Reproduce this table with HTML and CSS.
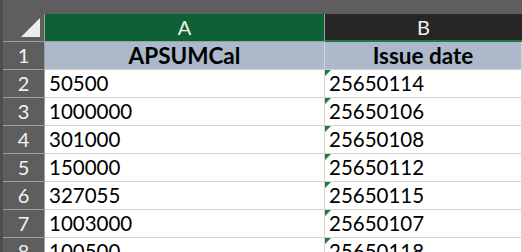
FILE: index.html
```html
<!DOCTYPE html>
<html lang="en">
<head>
    <meta charset="UTF-8">
    <title>Sheet</title>
    <link rel="stylesheet" href="styles.css">
</head>
<body>
    <div class="sheet">
        <div class="row col-heads">
            <div class="corner"><span class="corner-mark"></span></div>
            <div class="col-head active">A</div>
            <div class="col-head current">B</div>
        </div>

        <div class="row title-row">
            <div class="row-num">1</div>
            <div class="cell title">APSUMCal</div>
            <div class="cell title">Issue date</div>
        </div>
        <div class="row">
            <div class="row-num">2</div>
            <div class="cell">50500</div>
            <div class="cell flagged">25650114</div>
        </div>
        <div class="row">
            <div class="row-num">3</div>
            <div class="cell">1000000</div>
            <div class="cell flagged">25650106</div>
        </div>
        <div class="row">
            <div class="row-num">4</div>
            <div class="cell">301000</div>
            <div class="cell flagged">25650108</div>
        </div>
        <div class="row">
            <div class="row-num">5</div>
            <div class="cell">150000</div>
            <div class="cell flagged">25650112</div>
        </div>
        <div class="row">
            <div class="row-num">6</div>
            <div class="cell">327055</div>
            <div class="cell flagged">25650115</div>
        </div>
        <div class="row">
            <div class="row-num">7</div>
            <div class="cell">1003000</div>
            <div class="cell flagged">25650107</div>
        </div>
        <div class="row">
            <div class="row-num">8</div>
            <div class="cell">100500</div>
            <div class="cell flagged">25650118</div>
        </div>
    </div>
</body>
</html>
```

FILE: styles.css
```css
body {
    margin: 0;
    background-color: #5e5e5e;
    font-family: Lato, "Liberation Sans", sans-serif;
    overflow: hidden;
}
.sheet {
    padding-top: 14px;
    border-left: 3px solid #4f4f4f;
    width: 522px;
    box-sizing: border-box;
}
.row {
    display: grid;
    grid-template-columns: 42px 280px 1fr;
    height: 28px;
    background-color: #ffffff;
}
.row-num {
    background-color: #5e5e5e;
    color: #f2f2f2;
    font-size: 20px;
    text-align: center;
    line-height: 27px;
    border-right: 1px solid #a0a0a0;
    border-bottom: 1px solid #a0a0a0;
}
.cell {
    position: relative;
    font-size: 20.5px;
    line-height: 27px;
    color: #000;
    padding-left: 4px;
    border-bottom: 1px solid #d4d4d4;
    border-right: 1px solid #d4d4d4;
    white-space: nowrap;
    overflow: hidden;
}
.title-row .cell {
    background-color: #acb9ca;
}
.cell.title {
    font-weight: bold;
    text-align: center;
    padding-left: 0;
    font-size: 22.5px;
}
.flagged::before {
    content: "";
    position: absolute;
    left: 0;
    top: 0;
    width: 6px;
    height: 6px;
    background-color: #1d7a3d;
    clip-path: polygon(0 0, 100% 0, 0 100%);
}
.col-heads {
    height: 28px;
    background-color: #5e5e5e;
}
.corner {
    display: flex;
    justify-content: flex-end;
    align-items: flex-end;
    padding: 0 4px 4px 0;
    border-right: 1px solid #a0a0a0;
    border-bottom: 1px solid #a0a0a0;
}
.corner-mark {
    width: 19px;
    height: 19px;
    background-color: #ececec;
    clip-path: polygon(100% 0, 100% 100%, 0 100%);
}
.col-head {
    color: #f2f2f2;
    font-size: 20px;
    text-align: center;
    line-height: 27px;
}
.col-head.active {
    background-color: #0e6134;
    border-right: 1px solid #a0a0a0;
    border-bottom: 1px solid #a0a0a0;
}
.col-head.current {
    background-color: #262626;
    line-height: 26px;
    border-bottom: 2px solid #1b7a40;
}
```
